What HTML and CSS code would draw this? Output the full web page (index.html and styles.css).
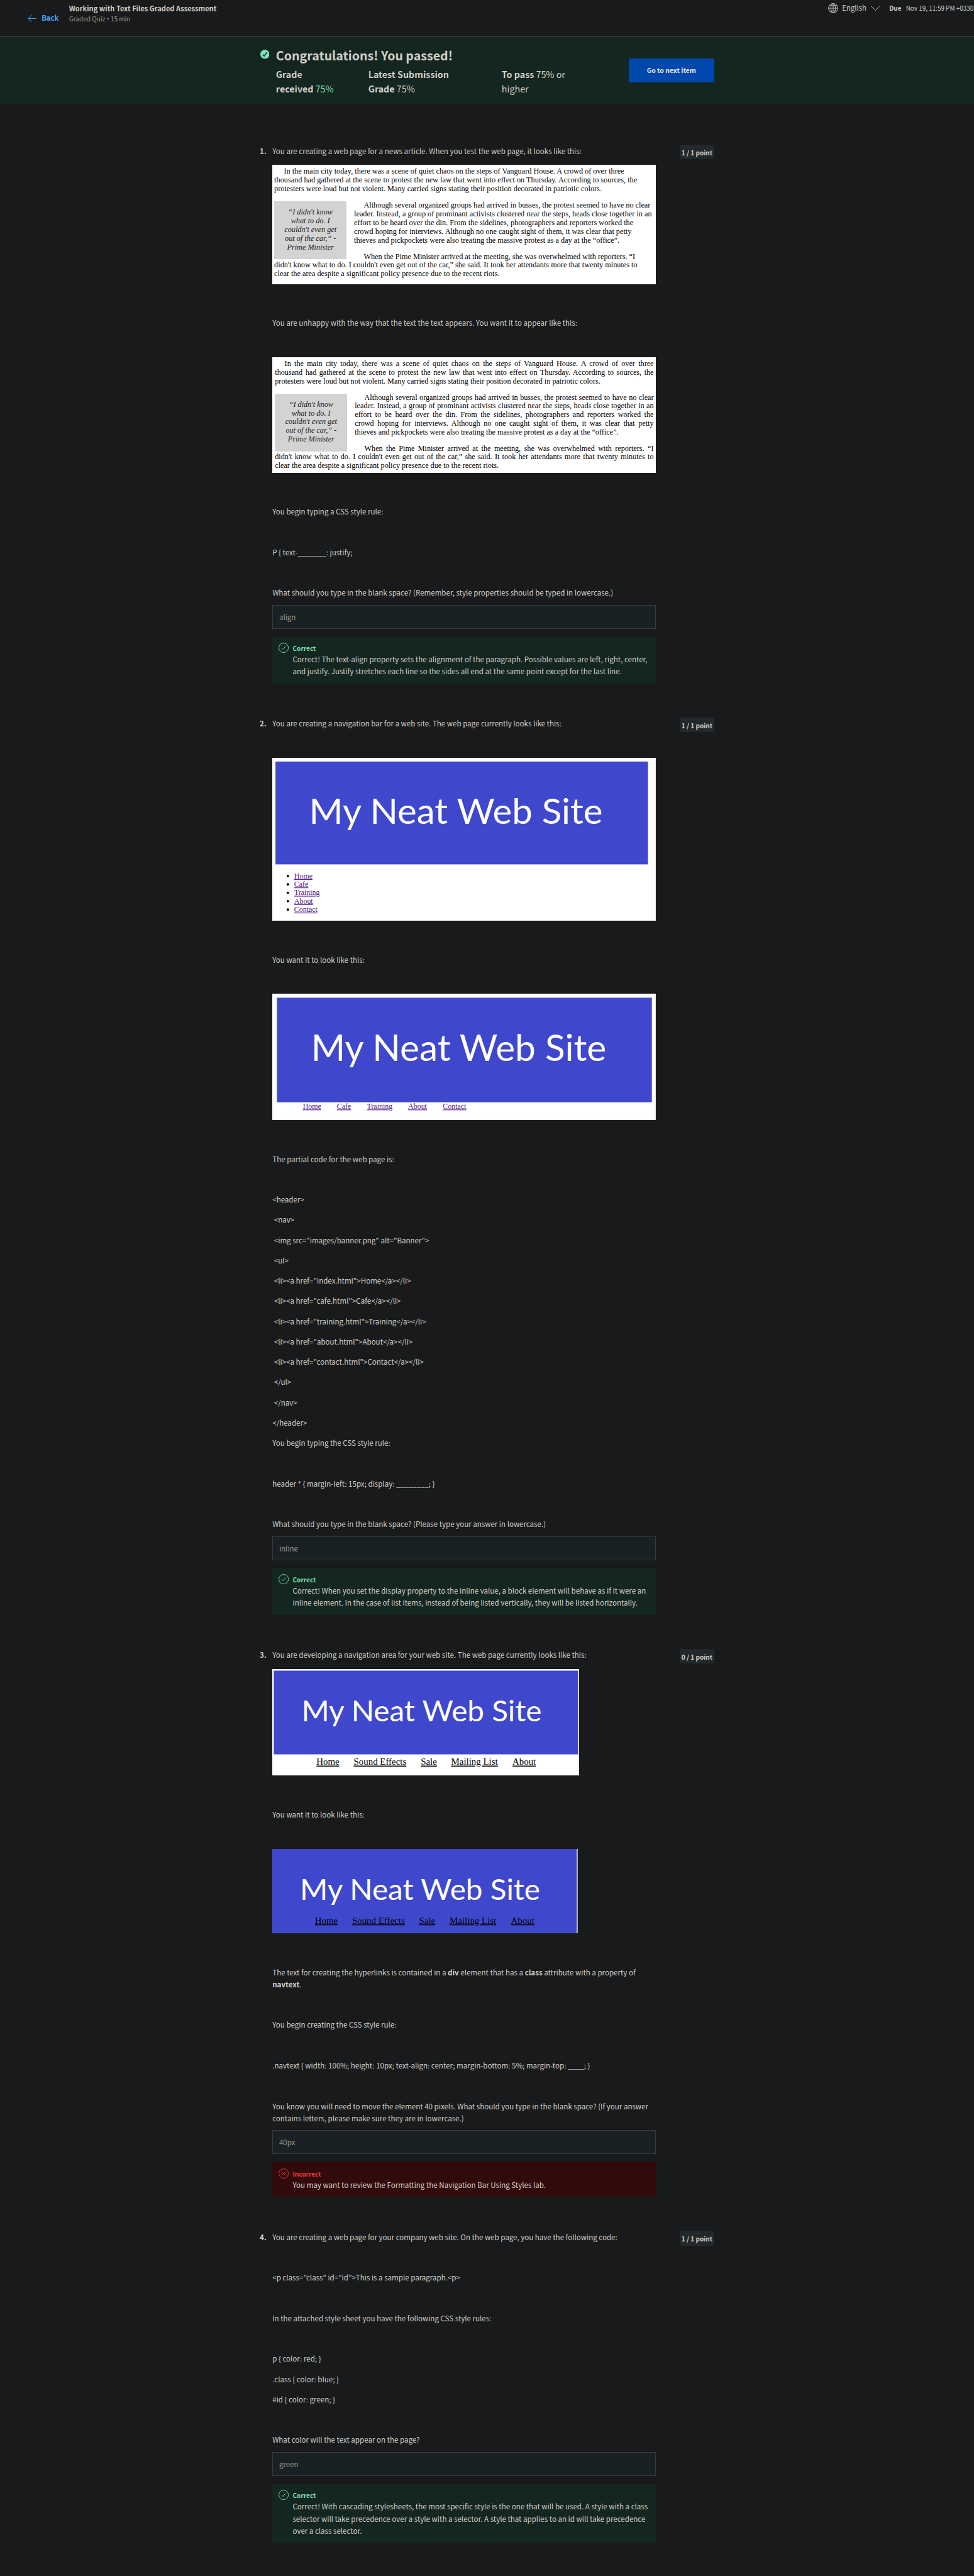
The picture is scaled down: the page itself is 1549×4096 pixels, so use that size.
FILE: index.html
```html
<!DOCTYPE html>
<html lang="en">
<head>
<meta charset="utf-8">
<title>Working with Text Files Graded Assessment</title>
<link rel="stylesheet" href="styles.css">
</head>
<body>
<svg class="defs" aria-hidden="true">
  <symbol id="icon-ok" viewBox="0 0 20 20"><circle cx="10" cy="10" r="9.4"/><path d="M6.2 10.6l2.5 2.6 5-6.2"/></symbol>
  <symbol id="icon-bad" viewBox="0 0 20 20"><circle cx="10" cy="10" r="9.4"/><path d="M6 6l8 8M14 6l-8 8"/></symbol>
</svg>

<header class="topbar">
  <a class="back"><svg class="back-arrow" viewBox="0 0 18 16"><path d="M17.5 8H1M8.5.5L1 8l7.500 7.500"/></svg>Back</a>
  <div class="heading">
    <h1 class="heading-title">Working with Text Files Graded Assessment</h1>
    <div class="heading-sub">Graded Quiz <span class="dot">•</span> 15 min</div>
  </div>
  <div class="tools">
    <svg class="globe" viewBox="0 0 20 20"><circle cx="10" cy="10" r="9.300"/><ellipse cx="10" cy="10" rx="4.600" ry="9.300"/><path d="M.7 10h18.600M10 .7v18.600M2.500 4.800h15M2.500 15.200h15"/></svg>
    <span class="lang">English</span>
    <svg class="chevron" viewBox="0 0 18 10"><path d="M.5.7L9 9.300 17.500.7"/></svg>
    <span class="due"><b>Due</b><span>Nov 19, 11:59 PM +0330</span></span>
  </div>
</header>

<section class="banner">
  <svg class="banner-icon" viewBox="0 0 18 18"><circle cx="9" cy="9" r="9"/><path d="M4.500 9.500l3 3 6-7.500"/></svg>
  <div class="result">
    <h2 class="result-title">Congratulations! You passed!</h2>
    <div class="stats">
      <div class="stat"><b>Grade<br>received</b> <span class="pass">75%</span></div>
      <div class="stat"><b>Latest Submission<br>Grade</b> 75%</div>
      <div class="stat"><b>To pass</b> 75% or<br>higher</div>
    </div>
  </div>
  <a class="next">Go to next item</a>
</section>

<main class="quiz">
  <section class="question">
    <div class="num">1.</div>
    <div class="content">
      <p class="tight">You are creating a web page for a news article. When you test the web page, it looks like this:</p>
      <div class="shot article">
        <div class="para"><span class="first">In the main city today, there was a scene of quiet chaos on the steps of Vanguard House. A crowd of over three</span><span>thousand had gathered at the scene to protest the new law that went into effect on Thursday. According to sources, the</span><span>protesters were loud but not violent. Many carried signs stating their position decorated in patriotic colors.</span></div>
        <div class="pull">“I didn't know<br>what to do. I<br>couldn't even get<br>out of the car,” -<br>Prime Minister</div>
        <div class="para"><span class="first">Although several organized groups had arrived in busses, the protest seemed to have no clear</span><span>leader. Instead, a group of prominant activists clustered near the steps, heads close together in an</span><span>effort to be heard over the din. From the sidelines, photographers and reporters worked the</span><span>crowd hoping for interviews. Although no one caught sight of them, it was clear that petty</span><span>thieves and pickpockets were also treating the massive protest as a day at the “office”.</span></div>
        <div class="para"><span class="first">When the Pime Minister arrived at the meeting, she was overwhelmed with reporters. “I</span><span>didn't know what to do. I couldn't even get out of the car,” she said. It took her attendants more that twenty minutes to</span><span>clear the area despite a significant policy presence due to the recent riots.</span></div>
      </div>
      <p>You are unhappy with the way that the text the text appears. You want it to appear like this:</p>
      <div class="shot article justified">
        <div class="para"><span class="first">In the main city today, there was a scene of quiet chaos on the steps of Vanguard House. A crowd of over three</span><span>thousand had gathered at the scene to protest the new law that went into effect on Thursday. According to sources, the</span><span class="last">protesters were loud but not violent. Many carried signs stating their position decorated in patriotic colors.</span></div>
        <div class="pull">“I didn't know<br>what to do. I<br>couldn't even get<br>out of the car,” -<br>Prime Minister</div>
        <div class="para"><span class="first">Although several organized groups had arrived in busses, the protest seemed to have no clear</span><span>leader. Instead, a group of prominant activists clustered near the steps, heads close together in an</span><span>effort to be heard over the din. From the sidelines, photographers and reporters worked the</span><span>crowd hoping for interviews. Although no one caught sight of them, it was clear that petty</span><span class="last">thieves and pickpockets were also treating the massive protest as a day at the “office”.</span></div>
        <div class="para"><span class="first">When the Pime Minister arrived at the meeting, she was overwhelmed with reporters. “I</span><span>didn't know what to do. I couldn't even get out of the car,” she said. It took her attendants more that twenty minutes to</span><span class="last">clear the area despite a significant policy presence due to the recent riots.</span></div>
      </div>
      <p>You begin typing a CSS style rule:</p>
      <p>P { text-_______: justify;</p>
      <p class="ask">What should you type in the blank space? (Remember, style properties should be typed in lowercase.)</p>
      <div class="answer">align</div>
      <div class="feedback">
        <svg class="feedback-icon"><use href="#icon-ok"/></svg>
        <div><div class="verdict">Correct</div>Correct! The text-align property sets the alignment of the paragraph. Possible values are left, right, center,<br>and justify. Justify stretches each line so the sides all end at the same point except for the last line.</div>
      </div>
    </div>
    <div class="points">1 / 1 point</div>
  </section>

  <section class="question">
    <div class="num">2.</div>
    <div class="content">
      <p>You are creating a navigation bar for a web site. The web page currently looks like this:</p>
      <svg class="shot site-list" viewBox="0 0 756 321">
        <rect width="756" height="321" fill="#fff"/>
        <rect class="blue" x="6.300" y="7.300" width="734.300" height="202.700"/>
        <text class="site-title" x="72.500" y="130" font-size="70" textLength="579" lengthAdjust="spacingAndGlyphs">My Neat Web Site</text>
        <g><circle cx="30.800" cy="233" r="2.400"/><circle cx="30.800" cy="249.500" r="2.400"/><circle cx="30.800" cy="266" r="2.400"/><circle cx="30.800" cy="282.500" r="2.400"/><circle cx="30.800" cy="299" r="2.400"/></g>
        <g class="visited" font-size="14.800"><text x="43.200" y="237.700">Home</text><text x="43.200" y="254.200">Cafe</text><text x="43.200" y="270.700">Training</text><text x="43.200" y="287.200">About</text><text x="43.200" y="303.700">Contact</text></g>
      </svg>
      <p>You want it to look like this:</p>
      <svg class="shot site-inline" viewBox="0 0 756 249">
        <rect width="756" height="249" fill="#fff"/>
        <rect class="blue" x="9.300" y="8" width="739" height="206"/>
        <text class="site-title" x="76.500" y="132.300" font-size="71.500" textLength="582" lengthAdjust="spacingAndGlyphs">My Neat Web Site</text>
        <g class="visited" font-size="14.800"><text x="60.300" y="227">Home</text><text x="127.300" y="227">Cafe</text><text x="186.600" y="227">Training</text><text x="267.900" y="227">About</text><text x="336.300" y="227">Contact</text></g>
      </svg>
      <p>The partial code for the web page is:</p>
      <div class="code">
        <p>&lt;header&gt;</p>
        <p>&nbsp;&lt;nav&gt;</p>
        <p>&nbsp;&lt;img src="images/banner.png" alt="Banner"&gt;</p>
        <p>&nbsp;&lt;ul&gt;</p>
        <p>&nbsp;&lt;li&gt;&lt;a href="index.html"&gt;Home&lt;/a&gt;&lt;/li&gt;</p>
        <p>&nbsp;&lt;li&gt;&lt;a href="cafe.html"&gt;Cafe&lt;/a&gt;&lt;/li&gt;</p>
        <p>&nbsp;&lt;li&gt;&lt;a href="training.html"&gt;Training&lt;/a&gt;&lt;/li&gt;</p>
        <p>&nbsp;&lt;li&gt;&lt;a href="about.html"&gt;About&lt;/a&gt;&lt;/li&gt;</p>
        <p>&nbsp;&lt;li&gt;&lt;a href="contact.html"&gt;Contact&lt;/a&gt;&lt;/li&gt;</p>
        <p>&nbsp;&lt;/ul&gt;</p>
        <p>&nbsp;&lt;/nav&gt;</p>
        <p>&lt;/header&gt;</p>
      </div>
      <p>You begin typing the CSS style rule:</p>
      <p>header * { margin-left: 15px; display: ________; }</p>
      <p class="ask">What should you type in the blank space? (Please type your answer in lowercase.)</p>
      <div class="answer">inline</div>
      <div class="feedback">
        <svg class="feedback-icon"><use href="#icon-ok"/></svg>
        <div><div class="verdict">Correct</div>Correct! When you set the display property to the inline value, a block element will behave as if it were an<br>inline element. In the case of list items, instead of being listed vertically, they will be listed horizontally.</div>
      </div>
    </div>
    <div class="points">1 / 1 point</div>
  </section>

  <section class="question">
    <div class="num">3.</div>
    <div class="content">
      <p class="tight">You are developing a navigation area for your web site. The web page currently looks like this:</p>
      <svg class="shot site-below" viewBox="0 0 605 210">
        <rect width="605" height="210" fill="#fff"/>
        <rect class="blue" x="3" y="3" width="600" height="165"/>
        <text class="site-title" x="57.500" y="103" font-size="56.500" textLength="473.500" lengthAdjust="spacingAndGlyphs">My Neat Web Site</text>
        <g class="plain" font-size="18.500"><text x="87" y="189">Home</text><text x="160.500" y="189">Sound Effects</text><text x="292.800" y="189">Sale</text><text x="352.700" y="189">Mailing List</text><text x="473.500" y="189">About</text></g>
      </svg>
      <p>You want it to look like this:</p>
      <svg class="shot site-over" viewBox="0 0 602 167">
        <rect width="602" height="167" fill="#fff"/>
        <rect class="blue" width="600.300" height="166"/>
        <text class="site-title" x="54.500" y="100.300" font-size="56.500" textLength="473.500" lengthAdjust="spacingAndGlyphs">My Neat Web Site</text>
        <g class="plain" font-size="18.500"><text x="84" y="147.300">Home</text><text x="157.300" y="147.300">Sound Effects</text><text x="289.500" y="147.300">Sale</text><text x="349.700" y="147.300">Mailing List</text><text x="470.500" y="147.300">About</text></g>
      </svg>
      <p>The text for creating the hyperlinks is contained in a <b>div</b> element that has a <b>class</b> attribute with a property of<br><b>navtext</b>.</p>
      <p>You begin creating the CSS style rule:</p>
      <p>.navtext { width: 100%; height: 10px; text-align: center; margin-bottom: 5%; margin-top: ____; }</p>
      <p class="ask">You know you will need to move the element 40 pixels. What should you type in the blank space? (If your answer<br>contains letters, please make sure they are in lowercase.)</p>
      <div class="answer">40px</div>
      <div class="feedback wrong">
        <svg class="feedback-icon"><use href="#icon-bad"/></svg>
        <div><div class="verdict">Incorrect</div>You may want to review the Formatting the Navigation Bar Using Styles lab.</div>
      </div>
    </div>
    <div class="points">0 / 1 point</div>
  </section>

  <section class="question">
    <div class="num">4.</div>
    <div class="content">
      <p>You are creating a web page for your company web site. On the web page, you have the following code:</p>
      <p>&lt;p class=”class” id=”id”&gt;This is a sample paragraph.&lt;p&gt;</p>
      <p>In the attached style sheet you have the following CSS style rules:</p>
      <p class="tight">p { color: red; }</p>
      <p class="tight">.class { color: blue; }</p>
      <p>#id { color: green; }</p>
      <p class="ask">What color will the text appear on the page?</p>
      <div class="answer">green</div>
      <div class="feedback">
        <svg class="feedback-icon"><use href="#icon-ok"/></svg>
        <div><div class="verdict">Correct</div>Correct! With cascading stylesheets, the most specific style is the one that will be used. A style with a class<br>selector will take precedence over a style with a selector. A style that applies to an id will take precedence<br>over a class selector.</div>
      </div>
    </div>
    <div class="points">1 / 1 point</div>
  </section>
</main>
</body>
</html>
```
FILE: styles.css
```css
/* 1rem stands for 10 design pixels */
html { font-size: 8.0677px; background: #181a1b; }
* { box-sizing: border-box; }
body {
  margin: 0;
  height: 507.7rem;
  overflow: hidden;
  background: #181a1b;
  color: #d3cfc9;
  font-family: "Noto Sans CJK KR", "Open Sans", sans-serif;
  font-size: 1.434rem;
  line-height: 2.4rem;
  white-space: nowrap;
}
svg { display: block; flex: none; fill: none; stroke-linecap: butt; }
.defs { position: absolute; width: 0; height: 0; }
h1, h2, p { margin: 0; font-size: inherit; }

.topbar { display: flex; height: 7.3rem; border-bottom: 0.1rem solid #46494b; }
.back { display: flex; align-items: center; gap: 1rem; width: 13.6rem; height: 7.2rem; padding-left: 5.4rem; color: #4aa5fb; font-size: 1.4rem; font-weight: 700; }
.back-arrow { width: 1.8rem; height: 1.6rem; stroke: #4aa5fb; stroke-width: 1.2; }
.heading { padding-top: 0.6rem; line-height: 2.1rem; }
.heading-title { font-size: 1.37rem; font-weight: 700; }
.heading-sub { font-size: 1.25rem; color: #a09889; }
.dot { font-family: "Open Sans", sans-serif; line-height: 1; }
.tools { display: flex; align-items: center; height: 3.2rem; margin-left: auto; }
.globe { width: 2rem; height: 2rem; stroke: #d3cfc9; stroke-width: 1.1; }
.lang { width: 6.5rem; padding-left: 0.8rem; font-size: 1.41rem; }
.chevron { width: 1.8rem; height: 1rem; stroke: #d3cfc9; stroke-width: 1.1; }
.due { display: flex; gap: 0.9rem; width: 16.7rem; margin-left: 1.8rem; font-size: 1.23rem; }

.banner { display: flex; height: 13.2rem; padding-left: 51.3rem; background: #142620; }
.banner-icon { width: 1.8rem; height: 1.8rem; margin: 2.5rem 1.3rem 0 0; }
.banner-icon circle { fill: #7fe3b6; }
.banner-icon path { stroke: #142620; stroke-width: 1.8; }
.result { width: 69.5rem; padding-top: 1.7rem; }
.result-title { font-size: 2.43rem; line-height: 3.6rem; font-weight: 700; }
.stats { display: flex; padding-top: 0.7rem; font-size: 1.77rem; line-height: 2.8rem; }
.stat { flex: none; width: 18.2rem; }
.stat + .stat { width: 26.3rem; }
.stat + .stat + .stat { width: 20rem; }
.pass { color: #7fe3b6; }
.next { width: 16.9rem; height: 4.8rem; margin-top: 4.2rem; border-radius: 0.4rem; background: #0048ad; color: #e8e6e3; font-size: 1.3rem; line-height: 4.8rem; font-weight: 700; text-align: center; }

.quiz { padding: 8rem 0 0 51.2rem; }
.question { display: flex; align-items: flex-start; margin-bottom: 6.7rem; }
.num { width: 2.5rem; padding-top: 0.08rem; font-weight: 700; }
.content { width: 75.6rem; margin-right: 4.7rem; }
.content p { padding-top: 0.08rem; margin-bottom: 5.52rem; }
.content .tight, .code p { margin-bottom: 1.52rem; }
.content .ask { margin-bottom: 1.12rem; }
.points { width: 6.8rem; height: 2.9rem; border-radius: 0.4rem; background: #23282a; font-size: 1.25rem; line-height: 3.1rem; font-weight: 700; text-align: center; }
.answer { height: 4.72rem; margin-bottom: 1.6rem; padding-left: 1.2rem; border: 1px solid #373c3e; background: #192124; color: #9d9587; line-height: 4.6rem; }
.feedback { display: flex; padding: 1.2rem 1.2rem 1.12rem; background: #142620; }
.feedback-icon { width: 2rem; height: 2rem; margin-right: 0.8rem; stroke: #7fe3b6; stroke-width: 1.1; }
.verdict { padding-top: 0.08rem; color: #7fe3b6; font-size: 1.25rem; line-height: 2rem; font-weight: 700; }
.wrong { background: #310a0b; }
.wrong .feedback-icon { stroke: #f3373c; }
.wrong .verdict { color: #f3373c; }

.shot { margin-bottom: 6.4rem; }
.article { height: 23.5rem; padding: 0.52rem 0.4rem 0 0.36rem; background: #fff; color: #000; font: 1.52rem/1.72rem "Liberation Serif", serif; }
.para { margin-bottom: 1.5rem; }
.para span { display: block; }
.para .first { text-indent: 1.9rem; }
.pull { float: left; width: 14.27rem; height: 11.45rem; margin-right: 1.47rem; padding-top: 1.4rem; background: #d3d3d3; color: #222; font-style: italic; text-align: center; }
.justified { height: 22.8rem; padding-left: 0.5rem; padding-right: 0.45rem; font-size: 1.51rem; line-height: 1.71rem; }
.justified .para span { text-align: justify; text-align-last: justify; }
.justified .para .last { text-align-last: left; }

.site-list { width: 75.6rem; height: 32.1rem; }
.site-list circle { fill: #000; }
.site-inline { width: 75.6rem; height: 24.9rem; }
.site-below { width: 60.5rem; height: 21rem; }
.site-over { width: 60.2rem; height: 16.7rem; }
.blue { fill: #3f48cc; }
.site-title { fill: #fff; font-family: Lato, sans-serif; }
.visited, .plain { font-family: "Liberation Serif", serif; text-decoration: underline; }
.visited { fill: #551a8b; }
.plain { fill: #000; }
```
